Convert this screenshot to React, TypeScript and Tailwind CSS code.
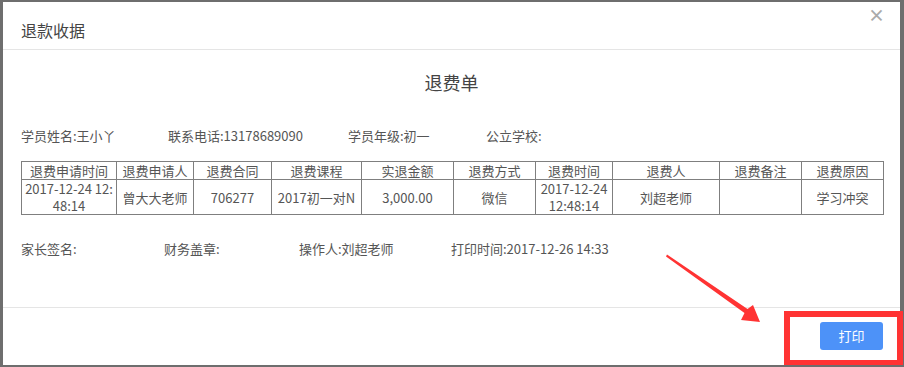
// 退款收据 modal — print preview of a refund slip.

const COLS = [95, 77, 78, 90, 92, 82, 77, 107, 82, 82];

const HEADERS = [
  "退费申请时间",
  "退费申请人",
  "退费合同",
  "退费课程",
  "实退金额",
  "退费方式",
  "退费时间",
  "退费人",
  "退费备注",
  "退费原因",
];

const CELLS: (string | string[])[] = [
  ["2017-12-24 12:", "48:14"],
  "曾大大老师",
  "706277",
  "2017初一对N",
  "3,000.00",
  "微信",
  ["2017-12-24", "12:48:14"],
  "刘超老师",
  "",
  "学习冲突",
];

const FONT = { fontFamily: '"Noto Sans CJK SC", "Liberation Sans", sans-serif' };

export default function App() {
  return (
    <div className="relative h-[367px] w-[904px] overflow-hidden bg-[#6e6e6e] pt-[2px] pl-[3px]" style={FONT}>
      <div className="flex h-[363px] w-[897px] flex-col bg-white text-[#555]">
        {/* header */}
        <div className="relative h-[48px] border-b border-[#e5e5e5] pl-[18px] pt-[17px]">
          <h1 className="text-[16px] leading-[22px] text-[#444]">退款收据</h1>
          <span className="absolute right-[15px] top-[3px] text-[17px] font-bold leading-[20px] text-[#aaa]">×</span>
        </div>

        {/* body */}
        <div className="h-[258px] border-b border-[#e5e5e5] px-[18px]">
          <div className="mt-[20px] text-center text-[18px] leading-[24px] text-[#444]">退费单</div>

          <div className="mt-[33px] flex text-[13px] leading-[18px]">
            <span className="w-[147px]">学员姓名:王小丫</span>
            <span className="w-[180px]">联系电话:13178689090</span>
            <span className="w-[138px]">学员年级:初一</span>
            <span>公立学校:</span>
          </div>

          <table className="mt-[16px] w-[862px] table-fixed border-collapse text-[13px]">
            <colgroup>
              {COLS.map((w, i) => (
                <col key={i} style={{ width: w }} />
              ))}
            </colgroup>
            <thead>
              <tr className="h-[18px]">
                {HEADERS.map((h) => (
                  <th key={h} className="border border-[#7f7f7f] p-0 text-center font-normal leading-[16px]">
                    {h}
                  </th>
                ))}
              </tr>
            </thead>
            <tbody>
              <tr className="h-[35px]">
                {CELLS.map((c, i) => (
                  <td key={i} className="whitespace-nowrap border border-[#7f7f7f] p-0 text-center leading-[17px]">
                    {Array.isArray(c) ? (
                      <>
                        <div>{c[0]}</div>
                        <div>{c[1]}</div>
                      </>
                    ) : (
                      c
                    )}
                  </td>
                ))}
              </tr>
            </tbody>
          </table>

          <div className="mt-[25px] flex text-[13px] leading-[18px]">
            <span className="w-[143px]">家长签名:</span>
            <span className="w-[135px]">财务盖章:</span>
            <span className="w-[152px]">操作人:刘超老师</span>
            <span>打印时间:2017-12-26 14:33</span>
          </div>
        </div>

        {/* footer */}
        <div className="flex justify-end pr-[17px] pt-[14px]">
          <button className="h-[28px] w-[63px] rounded-[3px] bg-[#4d92f8] text-[13px] text-white">打印</button>
        </div>
      </div>

      {/* annotation: arrow + box */}
      <svg className="pointer-events-none absolute left-0 top-0" width="904" height="367">
        <polygon
          points="667,254.5 747.5,309 753,305 760,322 741,320 744.5,313 666,256.5"
          fill="#f33"
        />
      </svg>
      <div className="pointer-events-none absolute left-[784px] top-[311px] h-[54px] w-[119px] border-[6px] border-b-[5px] border-[#f33]" />
    </div>
  );
}
